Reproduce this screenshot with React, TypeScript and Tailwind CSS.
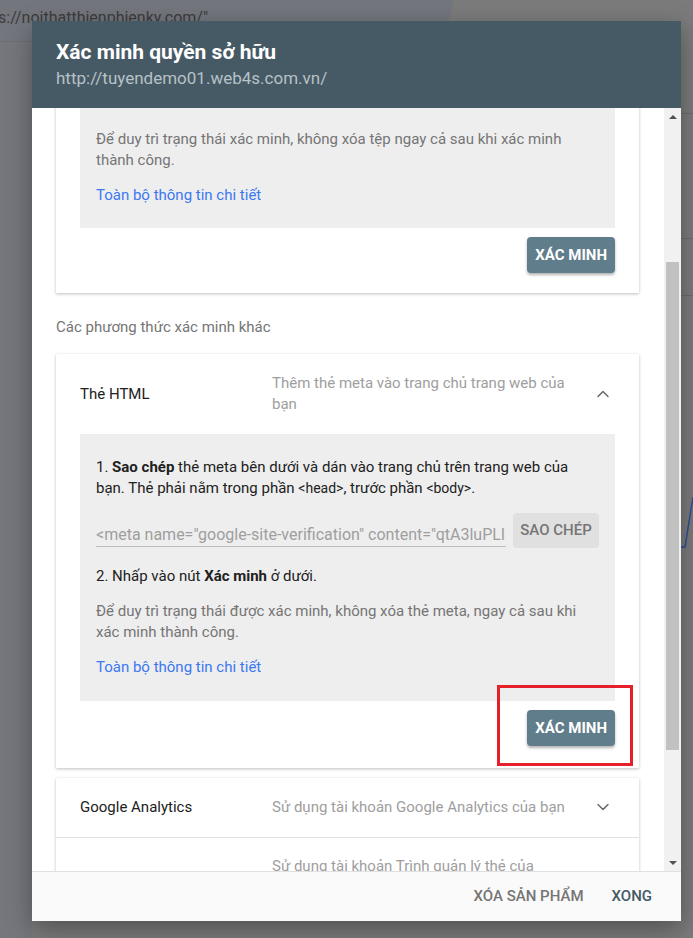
import { ChevronUp, ChevronDown } from "lucide-react";

const font = { fontFamily: "Roboto, 'Noto Sans', sans-serif" };

function VerifyButton() {
  return (
    <button className="h-9 px-2 rounded bg-[#607d8b] text-white text-[15px] font-bold shadow-[0_2px_3px_rgba(0,0,0,0.3)]">
      XÁC MINH
    </button>
  );
}

function MethodRow({
  title,
  desc,
  open,
  border,
  tall,
  low,
}: {
  title: string;
  desc: string;
  open?: boolean;
  border?: boolean;
  tall?: boolean;
  low?: boolean;
}) {
  return (
    <div
      className={`flex items-center px-6 ${tall ? "py-[19px]" : "py-[18px]"} ${border ? "border-b border-[#e0e0e0]" : ""}`}
    >
      <div className={`w-[192px] shrink-0 text-[15px] text-[#212121] ${low ? "pt-[14px]" : ""}`}>{title}</div>
      <div className="w-[306px] text-[15px] leading-[21px] text-[#9e9e9e]">{desc}</div>
      <div className="flex-1 flex justify-end pr-[2px]">
        {open ? (
          <ChevronUp className="w-5 h-5 text-[#616161]" strokeWidth={1.6} />
        ) : (
          <ChevronDown className="w-5 h-5 text-[#616161]" strokeWidth={1.6} />
        )}
      </div>
    </div>
  );
}

export default function App() {
  return (
    <div className="relative w-[693px] h-[938px] overflow-hidden bg-[#7b7b7b]" style={font}>
      {/* dimmed page behind */}
      <div className="absolute left-0 top-0 w-[455px] h-[41px] rounded-br-[40px] bg-[#74767e] text-[16px] text-[#3c3c3c] pt-[6px] -ml-[2px]">
        s://noithatthienphienky.com/"
      </div>
      <div className="absolute left-0 top-[41px] w-[32px] h-[897px] bg-[#76777d] border-t border-[#6f7075]" />
      <div className="absolute left-[681px] top-[113px] w-[12px] h-[1px] bg-[#6c6c6c]" />
      <div className="absolute left-[681px] top-[238px] w-[12px] h-[1px] bg-[#6c6c6c]" />
      <div className="absolute left-[681px] top-[295px] w-[12px] h-[1px] bg-[#6c6c6c]" />
      <svg className="absolute left-[680px] top-[490px]" width="13" height="60" viewBox="0 0 13 60">
        <path d="M0 57 H5 L13 7" fill="none" stroke="#2b4f9a" strokeWidth="1.5" />
      </svg>

      {/* dialog */}
      <div className="absolute left-[32px] top-[21px] w-[649px] h-[900px] flex flex-col bg-white shadow-[0_8px_24px_rgba(0,0,0,0.35)]">
        <div className="h-[87px] shrink-0 bg-[#465a65] px-6 pt-[19px]">
          <div className="text-[21px] leading-[25px] font-bold text-white">Xác minh quyền sở hữu</div>
          <div className="text-[17px] leading-[22px] mt-[2px] text-[#b7c1c7]">http://tuyendemo01.web4s.com.vn/</div>
        </div>

        <div className="flex-1 flex min-h-0">
          <div className="flex-1 overflow-hidden pl-6 pr-[25px]">
            {/* HTML file card (scrolled) */}
            <div className="-mt-[29px] bg-white shadow-[0_1px_3px_rgba(0,0,0,0.25)] px-6 pb-5">
              <div className="bg-[#eeeeee] px-4 pt-[11px] pb-[22px] text-[15px] leading-[21px]">
                <p className="text-[#212121]">3. Nhấp vào nút Xác minh ở phía dưới.</p>
                <p className="mt-[18px] text-[#757575]">
                  Để duy trì trạng thái xác minh, không xóa tệp ngay cả sau khi xác minh thành công.
                </p>
                <a className="block mt-[14px] text-[#3c78f0]">Toàn bộ thông tin chi tiết</a>
              </div>
              <div className="flex justify-end mt-[9px]">
                <VerifyButton />
              </div>
            </div>

            <p className="mt-[24px] text-[15px] leading-[21px] text-[#757575]">Các phương thức xác minh khác</p>

            {/* HTML tag card */}
            <div className="mt-[16px] bg-white shadow-[0_1px_3px_rgba(0,0,0,0.25)]">
              <MethodRow title="Thẻ HTML" desc="Thêm thẻ meta vào trang chủ trang web của bạn" open tall />
              <div className="px-6 pb-[22px] relative">
                <div className="bg-[#eeeeee] px-4 pt-[23px] pb-[23px] text-[15px] leading-[21px]">
                  <p className="text-[#212121]">
                    1. <b>Sao chép</b> thẻ meta bên dưới và dán vào trang chủ trên trang web của bạn. Thẻ phải nằm trong
                    phần <span className="text-[14px]">&lt;head&gt;</span>, trước phần{" "}
                    <span className="text-[14px]">&lt;body&gt;</span>.
                  </p>
                  <div className="mt-[14px] flex items-end gap-[7px]">
                    <div className="flex-1 min-w-0 overflow-hidden whitespace-nowrap border-b border-[#bdbdbd] text-[16px] leading-[22px] text-[#9e9e9e] mb-[1px]">
                      &lt;meta name="google-site-verification" content="qtA3luPLI8yXc2kq0Vd" /&gt;
                    </div>
                    <button className="w-[86px] h-[35px] shrink-0 rounded-sm bg-[#e0e0e0] text-[15px] font-medium text-[#757575]">
                      SAO CHÉP
                    </button>
                  </div>
                  <p className="mt-[18px] text-[#212121]">
                    2. Nhấp vào nút <b>Xác minh</b> ở dưới.
                  </p>
                  <p className="mt-[14px] text-[#757575]">
                    Để duy trì trạng thái được xác minh, không xóa thẻ meta, ngay cả sau khi xác minh thành công.
                  </p>
                  <a className="block mt-[14px] text-[#3c78f0]">Toàn bộ thông tin chi tiết</a>
                </div>
                <div className="flex justify-end mt-[9px]">
                  <VerifyButton />
                </div>
                {/* red highlight */}
                <div className="absolute right-[6px] bottom-[2px] w-[136px] h-[81px] border-[3px] border-[#e5202a]" />
              </div>
            </div>

            {/* other methods */}
            <div className="mt-[10px] bg-white shadow-[0_1px_3px_rgba(0,0,0,0.25)]">
              <MethodRow title="Google Analytics" desc="Sử dụng tài khoản Google Analytics của bạn" border />
              <MethodRow title="Google Tag Manager" desc="Sử dụng tài khoản Trình quản lý thẻ của Google" low />
            </div>
          </div>

          {/* scrollbar */}
          <div className="w-[17px] shrink-0 bg-[#f1f1f1] flex flex-col items-center">
            <div className="h-[17px] flex items-center justify-center">
              <div className="w-0 h-0 border-x-[4px] border-x-transparent border-b-[4px] border-b-[#505050]" />
            </div>
            <div className="mt-[137px] w-[13px] h-[488px] bg-[#c1c1c1]" />
            <div className="flex-1" />
            <div className="h-[17px] flex items-center justify-center">
              <div className="w-0 h-0 border-x-[4px] border-x-transparent border-t-[4px] border-t-[#505050]" />
            </div>
          </div>
        </div>

        <div className="h-[50px] shrink-0 bg-[#fafafa] border-t border-[#e0e0e0] flex items-center justify-end gap-7 pr-[29px] text-[15px] font-medium">
          <span className="text-[#757575]">XÓA SẢN PHẨM</span>
          <span className="text-[#455a64]">XONG</span>
        </div>
      </div>
    </div>
  );
}
